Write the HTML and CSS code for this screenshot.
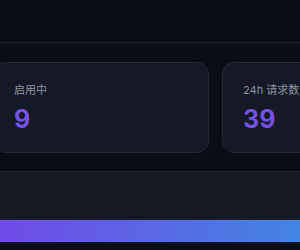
FILE: index.html
```html
<!DOCTYPE html>
<html lang="zh-CN">
<head>
    <meta charset="UTF-8">
    <meta name="viewport" content="width=device-width, initial-scale=1.0">
    <title>控制台</title>
    <link rel="stylesheet" href="styles.css">
</head>
<body>
    <div class="page">
        <!-- шапка -->
        <div class="top-bar"></div>

        <div class="main">
            <div class="stats">
                <div class="stat-card">
                    <div class="stat-label">启用中</div>
                    <div class="stat-value">9</div>
                </div>
                <div class="stat-card">
                    <div class="stat-label">24h 请求数</div>
                    <div class="stat-value">39</div>
                </div>
            </div>

            <div class="panel"></div>
            <div class="progress"></div>
        </div>
    </div>
</body>
</html>
```

FILE: styles.css
```css
body {
    margin: 0;
    font-family: Inter, "Noto Sans CJK SC", sans-serif;
    background-color: #0b0d14;
    color: #e5e7eb;
    overflow: hidden;
}

.page {
    width: 300px;
    height: 250px;
    overflow: hidden;
}

.top-bar {
    height: 42px;
    border-bottom: 1px solid #1d2130;
}

.main {
    padding-top: 19px;
    margin-left: -7px;
}

.stats {
    display: grid;
    grid-template-columns: 216px 216px;
    gap: 13px;
}

.stat-card {
    background: #141925;
    border: 1px solid #222838;
    border-radius: 12px;
    padding: 19px 20px 18px;
}

.stat-label {
    font-size: 11px;
    line-height: 16px;
    color: #8d93a0;
}

.stat-value {
    margin-top: 6px;
    font-size: 25px;
    line-height: 30px;
    font-weight: 700;
    color: #7452e4;
}

.panel {
    margin-top: 18px;
    height: 47px;
    background: #141924;
    border-top: 1px solid #1f2433;
    border-bottom: 1px solid #1a2030;
}

.progress {
    height: 22px;
    background: linear-gradient(90deg, #7249e8, #4384e1);
    border-bottom: 2px solid #0e1424;
}
```
